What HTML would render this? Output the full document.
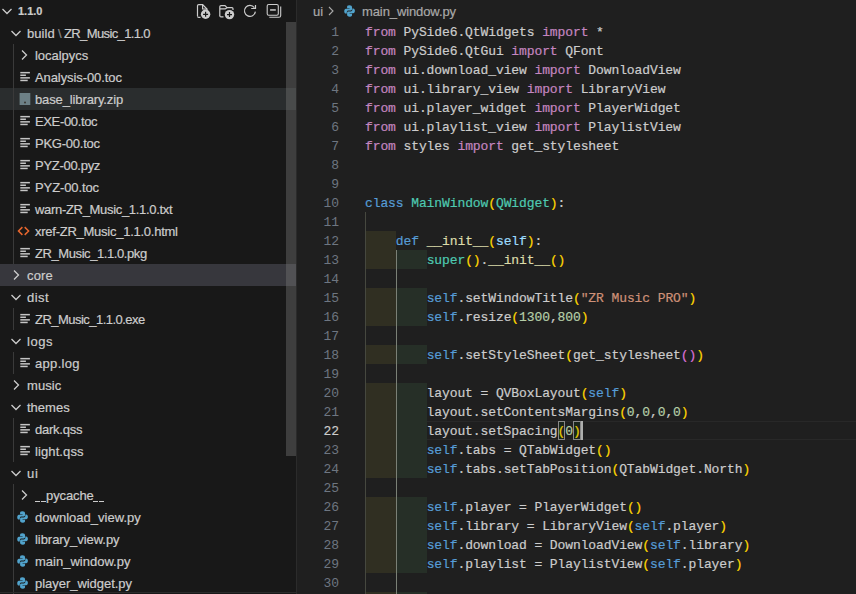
<!DOCTYPE html>
<html><head><meta charset="utf-8"><style>
*{margin:0;padding:0;box-sizing:border-box}
html,body{width:856px;height:594px;overflow:hidden;background:#1f1f1f}
body{position:relative;font-family:"Liberation Sans",sans-serif;-webkit-text-stroke:0.2px currentColor}
#sb{position:absolute;left:0;top:0;width:296px;height:594px;background:#181818;overflow:hidden}
.row{position:absolute;left:0;width:286px;height:22px;color:#cccccc;font-size:13px}
.row.hover{background:#2a2d2e;width:296px}
.row.sel{background:#37373d;width:296px}
.ic{position:absolute;display:block}
.hdr{position:absolute;left:18px;top:4px;font-weight:bold;font-size:11px;line-height:14px;color:#cccccc}
.lbl{position:absolute;top:1px;line-height:22px;white-space:nowrap;letter-spacing:-0.15px}
.sep{color:#8b8b8b}
.us{position:absolute;top:17px;width:5.2px;height:1.3px;background:#cccccc}
.guide{position:absolute;left:13px;width:1px;background:#3a3a3a}
#sbthumb{position:absolute;left:286px;top:22px;width:10px;height:434px;background:rgba(121,121,121,0.4)}
#sbbot{position:absolute;left:0;top:592px;width:296px;height:1px;background:#2b2b2b}
#ed{position:absolute;left:297px;top:0;width:559px;height:594px;background:#1f1f1f;overflow:hidden}
#sbborder{position:absolute;left:296px;top:0;width:1px;height:594px;background:#2b2b2b}
#bc{position:absolute;left:0;top:0;width:559px;height:22px}
.bct{position:absolute;top:1px;line-height:22px;font-size:13px;color:#a9a9a9;white-space:nowrap;letter-spacing:-0.1px}
#curline{position:absolute;left:68px;width:600px;height:19px;border-top:1px solid #282828;border-bottom:1px solid #282828}
.rb{position:absolute;height:19px}
.r1{background:#302f22}
.r2{background:#262f27}
.ig{position:absolute;width:1px}
.g1{background:#46483f}
.g2{background:#7a8076}
.ln{position:absolute;left:0;width:42px;height:19px;line-height:19px;text-align:right;color:#6e7681;font-family:"Liberation Mono",monospace;font-size:13px;letter-spacing:-0.1px;-webkit-text-stroke:0}
.ln.act{color:#cccccc;-webkit-text-stroke:0.15px currentColor}
.code{position:absolute;left:68px;height:19px;line-height:19px;white-space:pre;color:#cccccc;font-family:"Liberation Mono",monospace;font-size:13px;letter-spacing:-0.1px}
.kw{color:#c586c0}
.bl{color:#569cd6}
.cl{color:#4ec9b0}
.fn{color:#dcdcaa}
.vr{color:#9cdcfe}
.st{color:#ce9178}
.nu{color:#b5cea8}
.b1{color:#ffd700}
.b2{color:#da70d6}
.bm{position:absolute;width:7.7px;height:19px;border:1px solid #888888;background:rgba(0,100,0,0.1)}
#cursor{position:absolute;width:2px;height:19px;background:#aeafad}
</style></head>
<body>
<div id="sb">
<div class="row" style="top:0"><svg class="ic" width="16" height="16" viewBox="0 0 16 16" style="left:-1px;top:3px"><path d="M3.5 6 L8 10.5 L12.5 6" fill="none" stroke="#cccccc" stroke-width="1.3"/></svg><span class="hdr">1.1.0</span><svg class="ic" width="96" height="22" viewBox="0 0 96 22" style="left:190px;top:0"><path d="M7.5 16 V5.8 Q7.5 4.6 8.7 4.6 H12.6 L17 9 V10" fill="none" stroke="#cccccc" stroke-width="1.2"/><path d="M7.5 16.2 Q7.5 17.3 8.7 17.3 H10.5" fill="none" stroke="#cccccc" stroke-width="1.2"/><path d="M12.6 4.6 V9 H17" fill="none" stroke="#cccccc" stroke-width="1.2"/><circle cx="15.6" cy="14.3" r="4.7" fill="#cccccc"/><path d="M15.6 11.8 V16.8 M13.1 14.3 H18.1" stroke="#181818" stroke-width="1.2"/><path d="M29.8 16 V6.8 Q29.8 5.6 31 5.6 H35 L37 7.7 H42 Q43 7.7 43 8.7 V10" fill="none" stroke="#cccccc" stroke-width="1.2"/><path d="M29.8 8.9 H35.2 L37 7.7" fill="none" stroke="#cccccc" stroke-width="1.2"/><path d="M29.8 15.8 Q29.8 16.9 31 16.9 H33.5" fill="none" stroke="#cccccc" stroke-width="1.2"/><circle cx="39.5" cy="14.6" r="4.7" fill="#cccccc"/><path d="M39.5 12.1 V17.1 M37 14.6 H42" stroke="#181818" stroke-width="1.2"/><path d="M65.4 11.7 A5.5 5.5 0 1 1 64.4 7.6" fill="none" stroke="#cccccc" stroke-width="1.2"/><path d="M61.2 8.5 H65.5 V4.9" fill="none" stroke="#cccccc" stroke-width="1.2"/><rect x="77.2" y="4.5" width="11.1" height="10.8" rx="1.5" fill="none" stroke="#cccccc" stroke-width="1.1"/><path d="M80.1 9.95 H85.8" stroke="#cccccc" stroke-width="1.5"/><path d="M90.7 6.5 V15.5 Q90.7 17.3 88.9 17.3 H79.3" fill="none" stroke="#cccccc" stroke-width="1.1"/></svg></div>
<div class="row" style="top:22px"><svg class="ic" width="16" height="16" viewBox="0 0 16 16" style="left:8px;top:3px"><path d="M3.5 6 L8 10.5 L12.5 6" fill="none" stroke="#cccccc" stroke-width="1.3"/></svg><span class="lbl" style="left:27px;letter-spacing:0.05px">build</span><span class="lbl sep" style="left:58px">\</span><span class="lbl" style="left:64px;letter-spacing:-0.62px">ZR_Music_1.1.0</span></div>
<div class="row" style="top:44px"><svg class="ic" width="16" height="16" viewBox="0 0 16 16" style="left:16px;top:3px"><path d="M6 3.5 L10.5 8 L6 12.5" fill="none" stroke="#cccccc" stroke-width="1.3"/></svg><span class="lbl" style="left:35px;letter-spacing:-0.037px">localpycs</span></div>
<div class="row" style="top:66px"><svg class="ic" width="12" height="12" viewBox="0 0 12 12" style="left:20px;top:5px"><rect x="0.3" y="0.9" width="9.6" height="1.5" fill="#c5c5c5"/><rect x="0.3" y="3.5" width="5.6" height="1.5" fill="#c5c5c5"/><rect x="0.3" y="6.1" width="9.6" height="1.5" fill="#c5c5c5"/><rect x="0.3" y="8.7" width="7.4" height="1.5" fill="#c5c5c5"/></svg><span class="lbl" style="left:35px;letter-spacing:-0.086px">Analysis-00.toc</span></div>
<div class="row hover" style="top:88px"><svg class="ic" width="12" height="13" viewBox="0 0 12 13" style="left:19px;top:5px"><rect x="0.6" y="0" width="10.7" height="12" fill="#6d8086"/><circle cx="6" cy="9.5" r="1" fill="#3a3530"/></svg><span class="lbl" style="left:35px;letter-spacing:-0.123px">base_library.zip</span></div>
<div class="row" style="top:110px"><svg class="ic" width="12" height="12" viewBox="0 0 12 12" style="left:20px;top:5px"><rect x="0.3" y="0.9" width="9.6" height="1.5" fill="#c5c5c5"/><rect x="0.3" y="3.5" width="5.6" height="1.5" fill="#c5c5c5"/><rect x="0.3" y="6.1" width="9.6" height="1.5" fill="#c5c5c5"/><rect x="0.3" y="8.7" width="7.4" height="1.5" fill="#c5c5c5"/></svg><span class="lbl" style="left:35px;letter-spacing:-0.361px">EXE-00.toc</span></div>
<div class="row" style="top:132px"><svg class="ic" width="12" height="12" viewBox="0 0 12 12" style="left:20px;top:5px"><rect x="0.3" y="0.9" width="9.6" height="1.5" fill="#c5c5c5"/><rect x="0.3" y="3.5" width="5.6" height="1.5" fill="#c5c5c5"/><rect x="0.3" y="6.1" width="9.6" height="1.5" fill="#c5c5c5"/><rect x="0.3" y="8.7" width="7.4" height="1.5" fill="#c5c5c5"/></svg><span class="lbl" style="left:35px;letter-spacing:-0.239px">PKG-00.toc</span></div>
<div class="row" style="top:154px"><svg class="ic" width="12" height="12" viewBox="0 0 12 12" style="left:20px;top:5px"><rect x="0.3" y="0.9" width="9.6" height="1.5" fill="#c5c5c5"/><rect x="0.3" y="3.5" width="5.6" height="1.5" fill="#c5c5c5"/><rect x="0.3" y="6.1" width="9.6" height="1.5" fill="#c5c5c5"/><rect x="0.3" y="8.7" width="7.4" height="1.5" fill="#c5c5c5"/></svg><span class="lbl" style="left:35px;letter-spacing:-0.283px">PYZ-00.pyz</span></div>
<div class="row" style="top:176px"><svg class="ic" width="12" height="12" viewBox="0 0 12 12" style="left:20px;top:5px"><rect x="0.3" y="0.9" width="9.6" height="1.5" fill="#c5c5c5"/><rect x="0.3" y="3.5" width="5.6" height="1.5" fill="#c5c5c5"/><rect x="0.3" y="6.1" width="9.6" height="1.5" fill="#c5c5c5"/><rect x="0.3" y="8.7" width="7.4" height="1.5" fill="#c5c5c5"/></svg><span class="lbl" style="left:35px;letter-spacing:-0.106px">PYZ-00.toc</span></div>
<div class="row" style="top:198px"><svg class="ic" width="12" height="12" viewBox="0 0 12 12" style="left:20px;top:5px"><rect x="0.3" y="0.9" width="9.6" height="1.5" fill="#c5c5c5"/><rect x="0.3" y="3.5" width="5.6" height="1.5" fill="#c5c5c5"/><rect x="0.3" y="6.1" width="9.6" height="1.5" fill="#c5c5c5"/><rect x="0.3" y="8.7" width="7.4" height="1.5" fill="#c5c5c5"/></svg><span class="lbl" style="left:35px;letter-spacing:-0.314px">warn-ZR_Music_1.1.0.txt</span></div>
<div class="row" style="top:220px"><svg class="ic" width="14" height="12" viewBox="0 0 14 12" style="left:17px;top:5px"><path d="M5.4 2.1 L1.5 6 L5.4 9.9 M7.7 2.1 L11.6 6 L7.7 9.9" fill="none" stroke="#e8672e" stroke-width="1.5"/></svg><span class="lbl" style="left:35px;letter-spacing:-0.254px">xref-ZR_Music_1.1.0.html</span></div>
<div class="row" style="top:242px"><svg class="ic" width="12" height="12" viewBox="0 0 12 12" style="left:20px;top:5px"><rect x="0.3" y="0.9" width="9.6" height="1.5" fill="#c5c5c5"/><rect x="0.3" y="3.5" width="5.6" height="1.5" fill="#c5c5c5"/><rect x="0.3" y="6.1" width="9.6" height="1.5" fill="#c5c5c5"/><rect x="0.3" y="8.7" width="7.4" height="1.5" fill="#c5c5c5"/></svg><span class="lbl" style="left:35px;letter-spacing:-0.415px">ZR_Music_1.1.0.pkg</span></div>
<div class="row sel" style="top:264px"><svg class="ic" width="16" height="16" viewBox="0 0 16 16" style="left:8px;top:3px"><path d="M6 3.5 L10.5 8 L6 12.5" fill="none" stroke="#cccccc" stroke-width="1.3"/></svg><span class="lbl" style="left:27px;letter-spacing:0.183px">core</span></div>
<div class="row" style="top:286px"><svg class="ic" width="16" height="16" viewBox="0 0 16 16" style="left:8px;top:3px"><path d="M3.5 6 L8 10.5 L12.5 6" fill="none" stroke="#cccccc" stroke-width="1.3"/></svg><span class="lbl" style="left:27px;letter-spacing:0.45px">dist</span></div>
<div class="row" style="top:308px"><svg class="ic" width="12" height="12" viewBox="0 0 12 12" style="left:20px;top:5px"><rect x="0.3" y="0.9" width="9.6" height="1.5" fill="#c5c5c5"/><rect x="0.3" y="3.5" width="5.6" height="1.5" fill="#c5c5c5"/><rect x="0.3" y="6.1" width="9.6" height="1.5" fill="#c5c5c5"/><rect x="0.3" y="8.7" width="7.4" height="1.5" fill="#c5c5c5"/></svg><span class="lbl" style="left:35px;letter-spacing:-0.526px">ZR_Music_1.1.0.exe</span></div>
<div class="row" style="top:330px"><svg class="ic" width="16" height="16" viewBox="0 0 16 16" style="left:8px;top:3px"><path d="M3.5 6 L8 10.5 L12.5 6" fill="none" stroke="#cccccc" stroke-width="1.3"/></svg><span class="lbl" style="left:27px;letter-spacing:0.55px">logs</span></div>
<div class="row" style="top:352px"><svg class="ic" width="12" height="12" viewBox="0 0 12 12" style="left:20px;top:5px"><rect x="0.3" y="0.9" width="9.6" height="1.5" fill="#c5c5c5"/><rect x="0.3" y="3.5" width="5.6" height="1.5" fill="#c5c5c5"/><rect x="0.3" y="6.1" width="9.6" height="1.5" fill="#c5c5c5"/><rect x="0.3" y="8.7" width="7.4" height="1.5" fill="#c5c5c5"/></svg><span class="lbl" style="left:35px;letter-spacing:0.317px">app.log</span></div>
<div class="row" style="top:374px"><svg class="ic" width="16" height="16" viewBox="0 0 16 16" style="left:8px;top:3px"><path d="M6 3.5 L10.5 8 L6 12.5" fill="none" stroke="#cccccc" stroke-width="1.3"/></svg><span class="lbl" style="left:27px;letter-spacing:0.1px">music</span></div>
<div class="row" style="top:396px"><svg class="ic" width="16" height="16" viewBox="0 0 16 16" style="left:8px;top:3px"><path d="M3.5 6 L8 10.5 L12.5 6" fill="none" stroke="#cccccc" stroke-width="1.3"/></svg><span class="lbl" style="left:27px;letter-spacing:0.01px">themes</span></div>
<div class="row" style="top:418px"><svg class="ic" width="12" height="12" viewBox="0 0 12 12" style="left:20px;top:5px"><rect x="0.3" y="0.9" width="9.6" height="1.5" fill="#c5c5c5"/><rect x="0.3" y="3.5" width="5.6" height="1.5" fill="#c5c5c5"/><rect x="0.3" y="6.1" width="9.6" height="1.5" fill="#c5c5c5"/><rect x="0.3" y="8.7" width="7.4" height="1.5" fill="#c5c5c5"/></svg><span class="lbl" style="left:35px;letter-spacing:-0.236px">dark.qss</span></div>
<div class="row" style="top:440px"><svg class="ic" width="12" height="12" viewBox="0 0 12 12" style="left:20px;top:5px"><rect x="0.3" y="0.9" width="9.6" height="1.5" fill="#c5c5c5"/><rect x="0.3" y="3.5" width="5.6" height="1.5" fill="#c5c5c5"/><rect x="0.3" y="6.1" width="9.6" height="1.5" fill="#c5c5c5"/><rect x="0.3" y="8.7" width="7.4" height="1.5" fill="#c5c5c5"/></svg><span class="lbl" style="left:35px;letter-spacing:0.1px">light.qss</span></div>
<div class="row" style="top:462px"><svg class="ic" width="16" height="16" viewBox="0 0 16 16" style="left:8px;top:3px"><path d="M3.5 6 L8 10.5 L12.5 6" fill="none" stroke="#cccccc" stroke-width="1.3"/></svg><span class="lbl" style="left:27px;letter-spacing:0.8px">ui</span></div>
<div class="row" style="top:484px"><svg class="ic" width="16" height="16" viewBox="0 0 16 16" style="left:16px;top:3px"><path d="M6 3.5 L10.5 8 L6 12.5" fill="none" stroke="#cccccc" stroke-width="1.3"/></svg><div class="us" style="left:35.3px"></div><div class="us" style="left:41.1px"></div><span class="lbl" style="left:46px;letter-spacing:-0.1px">pycache</span><div class="us" style="left:93px"></div><div class="us" style="left:98.8px"></div></div>
<div class="row" style="top:506px"><svg class="ic" width="12" height="13" viewBox="0 0 12 13" style="left:17px;top:5px"><g transform="translate(0.05,0) scale(0.92,1)"><path d="M5.8 0.3 C3.4 0.3 3.3 1.3 3.3 2.2 V3.3 H6 V3.8 H2 C0.9 3.8 0.2 4.8 0.2 6.2 C0.2 7.7 0.9 8.6 2 8.6 H3 V7.2 C3 6.2 3.8 5.5 4.8 5.5 H7.3 C8.1 5.5 8.7 4.9 8.7 4.1 V2.2 C8.7 1.2 7.9 0.3 5.8 0.3 Z" fill="#51a3cc"/><path d="M6.2 11.7 C8.6 11.7 8.7 10.7 8.7 9.8 V8.7 H6 V8.2 H10 C11.1 8.2 11.8 7.2 11.8 5.8 C11.8 4.3 11.1 3.4 10 3.4 H9 V4.8 C9 5.8 8.2 6.5 7.2 6.5 H4.7 C3.9 6.5 3.3 7.1 3.3 7.9 V9.8 C3.3 10.8 4.1 11.7 6.2 11.7 Z" fill="#51a3cc"/></g></svg><span class="lbl" style="left:35px;letter-spacing:0.023px">download_view.py</span></div>
<div class="row" style="top:528px"><svg class="ic" width="12" height="13" viewBox="0 0 12 13" style="left:17px;top:5px"><g transform="translate(0.05,0) scale(0.92,1)"><path d="M5.8 0.3 C3.4 0.3 3.3 1.3 3.3 2.2 V3.3 H6 V3.8 H2 C0.9 3.8 0.2 4.8 0.2 6.2 C0.2 7.7 0.9 8.6 2 8.6 H3 V7.2 C3 6.2 3.8 5.5 4.8 5.5 H7.3 C8.1 5.5 8.7 4.9 8.7 4.1 V2.2 C8.7 1.2 7.9 0.3 5.8 0.3 Z" fill="#51a3cc"/><path d="M6.2 11.7 C8.6 11.7 8.7 10.7 8.7 9.8 V8.7 H6 V8.2 H10 C11.1 8.2 11.8 7.2 11.8 5.8 C11.8 4.3 11.1 3.4 10 3.4 H9 V4.8 C9 5.8 8.2 6.5 7.2 6.5 H4.7 C3.9 6.5 3.3 7.1 3.3 7.9 V9.8 C3.3 10.8 4.1 11.7 6.2 11.7 Z" fill="#51a3cc"/></g></svg><span class="lbl" style="left:35px;letter-spacing:-0.05px">library_view.py</span></div>
<div class="row" style="top:550px"><svg class="ic" width="12" height="13" viewBox="0 0 12 13" style="left:17px;top:5px"><g transform="translate(0.05,0) scale(0.92,1)"><path d="M5.8 0.3 C3.4 0.3 3.3 1.3 3.3 2.2 V3.3 H6 V3.8 H2 C0.9 3.8 0.2 4.8 0.2 6.2 C0.2 7.7 0.9 8.6 2 8.6 H3 V7.2 C3 6.2 3.8 5.5 4.8 5.5 H7.3 C8.1 5.5 8.7 4.9 8.7 4.1 V2.2 C8.7 1.2 7.9 0.3 5.8 0.3 Z" fill="#51a3cc"/><path d="M6.2 11.7 C8.6 11.7 8.7 10.7 8.7 9.8 V8.7 H6 V8.2 H10 C11.1 8.2 11.8 7.2 11.8 5.8 C11.8 4.3 11.1 3.4 10 3.4 H9 V4.8 C9 5.8 8.2 6.5 7.2 6.5 H4.7 C3.9 6.5 3.3 7.1 3.3 7.9 V9.8 C3.3 10.8 4.1 11.7 6.2 11.7 Z" fill="#51a3cc"/></g></svg><span class="lbl" style="left:35px;letter-spacing:0.004px">main_window.py</span></div>
<div class="row" style="top:572px"><svg class="ic" width="12" height="13" viewBox="0 0 12 13" style="left:17px;top:5px"><g transform="translate(0.05,0) scale(0.92,1)"><path d="M5.8 0.3 C3.4 0.3 3.3 1.3 3.3 2.2 V3.3 H6 V3.8 H2 C0.9 3.8 0.2 4.8 0.2 6.2 C0.2 7.7 0.9 8.6 2 8.6 H3 V7.2 C3 6.2 3.8 5.5 4.8 5.5 H7.3 C8.1 5.5 8.7 4.9 8.7 4.1 V2.2 C8.7 1.2 7.9 0.3 5.8 0.3 Z" fill="#51a3cc"/><path d="M6.2 11.7 C8.6 11.7 8.7 10.7 8.7 9.8 V8.7 H6 V8.2 H10 C11.1 8.2 11.8 7.2 11.8 5.8 C11.8 4.3 11.1 3.4 10 3.4 H9 V4.8 C9 5.8 8.2 6.5 7.2 6.5 H4.7 C3.9 6.5 3.3 7.1 3.3 7.9 V9.8 C3.3 10.8 4.1 11.7 6.2 11.7 Z" fill="#51a3cc"/></g></svg><span class="lbl" style="left:35px;letter-spacing:-0.037px">player_widget.py</span></div>
<div class="guide" style="top:44px;height:220px"></div>
<div class="guide" style="top:308px;height:22px"></div>
<div class="guide" style="top:352px;height:22px"></div>
<div class="guide" style="top:418px;height:44px"></div>
<div class="guide" style="top:484px;height:110px"></div>
<div id="sbthumb"></div>
<div id="sbbot"></div>
</div>
<div id="sbborder"></div>
<div id="ed">
<div id="bc"><span class="bct" style="left:16px">ui</span><svg class="ic" width="16" height="16" viewBox="0 0 16 16" style="left:26px;top:3px"><path d="M6 4 L10 8 L6 12" fill="none" stroke="#a9a9a9" stroke-width="1.1"/></svg><svg class="ic" width="12" height="13" viewBox="0 0 12 13" style="left:47px;top:5px"><g transform="translate(0.05,0) scale(0.92,1)"><path d="M5.8 0.3 C3.4 0.3 3.3 1.3 3.3 2.2 V3.3 H6 V3.8 H2 C0.9 3.8 0.2 4.8 0.2 6.2 C0.2 7.7 0.9 8.6 2 8.6 H3 V7.2 C3 6.2 3.8 5.5 4.8 5.5 H7.3 C8.1 5.5 8.7 4.9 8.7 4.1 V2.2 C8.7 1.2 7.9 0.3 5.8 0.3 Z" fill="#51a3cc"/><path d="M6.2 11.7 C8.6 11.7 8.7 10.7 8.7 9.8 V8.7 H6 V8.2 H10 C11.1 8.2 11.8 7.2 11.8 5.8 C11.8 4.3 11.1 3.4 10 3.4 H9 V4.8 C9 5.8 8.2 6.5 7.2 6.5 H4.7 C3.9 6.5 3.3 7.1 3.3 7.9 V9.8 C3.3 10.8 4.1 11.7 6.2 11.7 Z" fill="#51a3cc"/></g></svg><span class="bct" style="left:65px">main_window.py</span></div>
<div id="curline" style="top:421px"></div>
<div class="rb r1" style="left:68.00px;top:231px;width:30.80px"></div>
<div class="rb r1" style="left:68.00px;top:250px;width:30.80px"></div>
<div class="rb r2" style="left:98.80px;top:250px;width:30.80px"></div>
<div class="rb r1" style="left:68.00px;top:288px;width:30.80px"></div>
<div class="rb r2" style="left:98.80px;top:288px;width:30.80px"></div>
<div class="rb r1" style="left:68.00px;top:307px;width:30.80px"></div>
<div class="rb r2" style="left:98.80px;top:307px;width:30.80px"></div>
<div class="rb r1" style="left:68.00px;top:345px;width:30.80px"></div>
<div class="rb r2" style="left:98.80px;top:345px;width:30.80px"></div>
<div class="rb r1" style="left:68.00px;top:383px;width:30.80px"></div>
<div class="rb r2" style="left:98.80px;top:383px;width:30.80px"></div>
<div class="rb r1" style="left:68.00px;top:402px;width:30.80px"></div>
<div class="rb r2" style="left:98.80px;top:402px;width:30.80px"></div>
<div class="rb r1" style="left:68.00px;top:421px;width:30.80px"></div>
<div class="rb r2" style="left:98.80px;top:421px;width:30.80px"></div>
<div class="rb r1" style="left:68.00px;top:440px;width:30.80px"></div>
<div class="rb r2" style="left:98.80px;top:440px;width:30.80px"></div>
<div class="rb r1" style="left:68.00px;top:459px;width:30.80px"></div>
<div class="rb r2" style="left:98.80px;top:459px;width:30.80px"></div>
<div class="rb r1" style="left:68.00px;top:497px;width:30.80px"></div>
<div class="rb r2" style="left:98.80px;top:497px;width:30.80px"></div>
<div class="rb r1" style="left:68.00px;top:516px;width:30.80px"></div>
<div class="rb r2" style="left:98.80px;top:516px;width:30.80px"></div>
<div class="rb r1" style="left:68.00px;top:535px;width:30.80px"></div>
<div class="rb r2" style="left:98.80px;top:535px;width:30.80px"></div>
<div class="rb r1" style="left:68.00px;top:554px;width:30.80px"></div>
<div class="rb r2" style="left:98.80px;top:554px;width:30.80px"></div>
<div class="rb r1" style="left:68.00px;top:592px;width:30.80px"></div>
<div class="rb r2" style="left:98.80px;top:592px;width:30.80px"></div>
<div class="ig g1" style="left:68.00px;top:212px;height:382px"></div>
<div class="ig g2" style="left:98.80px;top:250px;height:344px"></div>
<div class="ln" style="top:23px">1</div>
<div class="ln" style="top:42px">2</div>
<div class="ln" style="top:61px">3</div>
<div class="ln" style="top:80px">4</div>
<div class="ln" style="top:99px">5</div>
<div class="ln" style="top:118px">6</div>
<div class="ln" style="top:137px">7</div>
<div class="ln" style="top:156px">8</div>
<div class="ln" style="top:175px">9</div>
<div class="ln" style="top:194px">10</div>
<div class="ln" style="top:213px">11</div>
<div class="ln" style="top:232px">12</div>
<div class="ln" style="top:251px">13</div>
<div class="ln" style="top:270px">14</div>
<div class="ln" style="top:289px">15</div>
<div class="ln" style="top:308px">16</div>
<div class="ln" style="top:327px">17</div>
<div class="ln" style="top:346px">18</div>
<div class="ln" style="top:365px">19</div>
<div class="ln" style="top:384px">20</div>
<div class="ln" style="top:403px">21</div>
<div class="ln act" style="top:422px">22</div>
<div class="ln" style="top:441px">23</div>
<div class="ln" style="top:460px">24</div>
<div class="ln" style="top:479px">25</div>
<div class="ln" style="top:498px">26</div>
<div class="ln" style="top:517px">27</div>
<div class="ln" style="top:536px">28</div>
<div class="ln" style="top:555px">29</div>
<div class="ln" style="top:574px">30</div>
<div class="ln" style="top:593px">31</div>
<div class="ln" style="top:612px">32</div>
<div class="code" style="top:23px"><span class="kw">from</span> PySide6.QtWidgets <span class="kw">import</span> *</div>
<div class="code" style="top:42px"><span class="kw">from</span> PySide6.QtGui <span class="kw">import</span> QFont</div>
<div class="code" style="top:61px"><span class="kw">from</span> ui.download_view <span class="kw">import</span> DownloadView</div>
<div class="code" style="top:80px"><span class="kw">from</span> ui.library_view <span class="kw">import</span> LibraryView</div>
<div class="code" style="top:99px"><span class="kw">from</span> ui.player_widget <span class="kw">import</span> PlayerWidget</div>
<div class="code" style="top:118px"><span class="kw">from</span> ui.playlist_view <span class="kw">import</span> PlaylistView</div>
<div class="code" style="top:137px"><span class="kw">from</span> styles <span class="kw">import</span> get_stylesheet</div>
<div class="code" style="top:156px"></div>
<div class="code" style="top:175px"></div>
<div class="code" style="top:194px"><span class="bl">class</span> <span class="cl">MainWindow</span><span class="b1">(</span><span class="cl">QWidget</span><span class="b1">)</span>:</div>
<div class="code" style="top:213px"></div>
<div class="code" style="top:232px">    <span class="bl">def</span> <span class="fn">__init__</span><span class="b1">(</span><span class="vr">self</span><span class="b1">)</span>:</div>
<div class="code" style="top:251px">        <span class="cl">super</span><span class="b1">()</span>.<span class="fn">__init__</span><span class="b1">()</span></div>
<div class="code" style="top:270px"></div>
<div class="code" style="top:289px">        <span class="bl">self</span>.setWindowTitle<span class="b1">(</span><span class="st">"ZR Music PRO"</span><span class="b1">)</span></div>
<div class="code" style="top:308px">        <span class="bl">self</span>.resize<span class="b1">(</span><span class="nu">1300</span>,<span class="nu">800</span><span class="b1">)</span></div>
<div class="code" style="top:327px"></div>
<div class="code" style="top:346px">        <span class="bl">self</span>.setStyleSheet<span class="b1">(</span>get_stylesheet<span class="b2">()</span><span class="b1">)</span></div>
<div class="code" style="top:365px"></div>
<div class="code" style="top:384px">        layout = QVBoxLayout<span class="b1">(</span><span class="bl">self</span><span class="b1">)</span></div>
<div class="code" style="top:403px">        layout.setContentsMargins<span class="b1">(</span><span class="nu">0</span>,<span class="nu">0</span>,<span class="nu">0</span>,<span class="nu">0</span><span class="b1">)</span></div>
<div class="code" style="top:422px">        layout.setSpacing<span class="b1">(</span><span class="nu">0</span><span class="b1">)</span></div>
<div class="code" style="top:441px">        <span class="bl">self</span>.tabs = QTabWidget<span class="b1">()</span></div>
<div class="code" style="top:460px">        <span class="bl">self</span>.tabs.setTabPosition<span class="b1">(</span>QTabWidget.North<span class="b1">)</span></div>
<div class="code" style="top:479px"></div>
<div class="code" style="top:498px">        <span class="bl">self</span>.player = PlayerWidget<span class="b1">()</span></div>
<div class="code" style="top:517px">        <span class="bl">self</span>.library = LibraryView<span class="b1">(</span><span class="bl">self</span>.player<span class="b1">)</span></div>
<div class="code" style="top:536px">        <span class="bl">self</span>.download = DownloadView<span class="b1">(</span><span class="bl">self</span>.library<span class="b1">)</span></div>
<div class="code" style="top:555px">        <span class="bl">self</span>.playlist = PlaylistView<span class="b1">(</span><span class="bl">self</span>.player<span class="b1">)</span></div>
<div class="code" style="top:574px"></div>
<div class="code" style="top:593px">        <span class="bl">self</span>.tabs.addTab<span class="b1">(</span><span class="bl">self</span>.player<span class="b1">)</span></div>
<div class="bm" style="left:260.50px;top:421px"></div>
<div class="bm" style="left:275.90px;top:421px"></div>
<div id="cursor" style="left:283.60px;top:421px"></div>
</div>
</body></html>
